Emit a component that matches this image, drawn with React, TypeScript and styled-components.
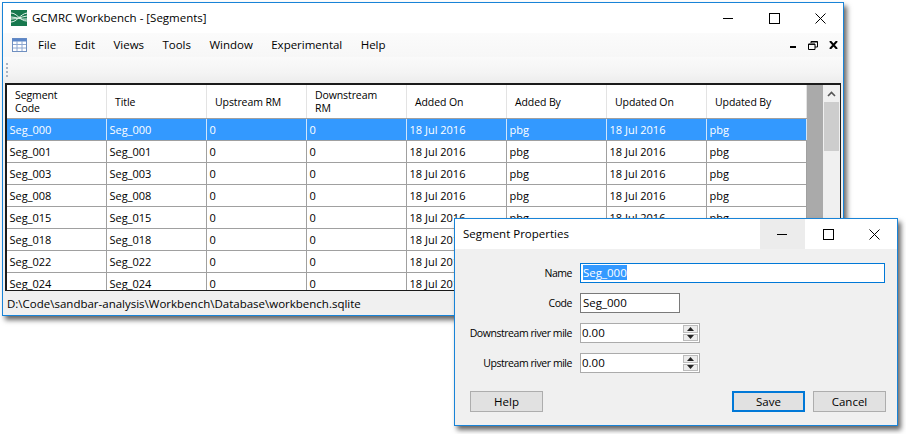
import React from "react";
import styled, { createGlobalStyle } from "styled-components";

const GlobalStyle = createGlobalStyle`
  html, body {
    margin: 0;
    padding: 0;
    background: #fff;
  }
  body {
    width: 906px;
    height: 434px;
    overflow: hidden;
    font-family: "Open Sans", "Noto Sans", Arial, sans-serif;
    font-size: 11.5px;
    color: #000;
  }
`;

const Stage = styled.div`
  position: relative;
  width: 906px;
  height: 434px;
  padding: 2px 0 0 2px;
  box-sizing: border-box;
`;

const MainWindow = styled.div`
  width: 842px;
  height: 314px;
  box-sizing: border-box;
  border: 1px solid #1883d7;
  box-shadow: 3px 4px 5px rgba(0, 0, 0, 0.6);
  background: #f0f0f0;
  display: flex;
  flex-direction: column;
`;

const TitleBar = styled.div`
  height: 30px;
  flex: none;
  background: #fff;
  display: flex;
  align-items: center;
`;

const AppLogo = styled.svg`
  margin-left: 8px;
  margin-right: 5px;
  flex: none;
`;

const TitleText = styled.div`
  flex: 1;
  font-size: 11.5px;
  padding-bottom: 2px;
`;

const CaptionButton = styled.div<{ $width: number; $hover?: boolean }>`
  width: ${(p) => p.$width}px;
  height: 30px;
  display: flex;
  align-items: center;
  justify-content: center;
  background: ${(p) => (p.$hover ? "#ececec" : "transparent")};
`;

const MenuBar = styled.div`
  height: 24px;
  flex: none;
  display: flex;
  align-items: center;
  background: linear-gradient(#fbfbfb, #f7f7f7);
  padding-left: 9px;
`;

const GridIcon = styled.svg`
  margin-right: 11px;
  flex: none;
`;

const MenuItem = styled.div`
  font-size: 11.5px;
  margin-right: 18.4px;
  padding-bottom: 2px;
`;

const MdiButtons = styled.div`
  margin-left: auto;
  display: flex;
  align-items: center;
  gap: 11px;
  padding-right: 5px;
`;

const ToolStrip = styled.div`
  height: 26px;
  flex: none;
  background: linear-gradient(#fafafa, #f4f4f4 60%, #ececec);
  display: flex;
  align-items: center;
  padding-left: 3px;
`;

const Grip = styled.div`
  width: 2px;
  height: 15px;
  background: repeating-linear-gradient(#a9b4c2 0 2px, transparent 2px 4px);
`;

const GridFrame = styled.div`
  flex: 1;
  min-height: 0;
  margin: 0 2px 0 2px;
  border: 2px solid #1a1a1a;
  border-right-width: 1px;
  border-bottom-width: 1px;
  display: flex;
  overflow: hidden;
  background: #aaaaaa;
`;

const GridBody = styled.div`
  flex: 1;
  min-width: 0;
  overflow: hidden;
`;

const Row = styled.div<{ $header?: boolean; $selected?: boolean }>`
  display: grid;
  grid-template-columns: repeat(8, 100px);
  width: 800px;
  height: ${(p) => (p.$header ? "33px" : "21px")};
  background: ${(p) => (p.$selected ? "#3399ff" : "#fff")};
  color: ${(p) => (p.$selected ? "#fff" : "#000")};
  border-bottom: 1px solid #a0a0a0;
`;

const HeaderCell = styled.div`
  border-right: 1px solid #e3e3e3;
  display: flex;
  align-items: center;
  padding: 1px 0 0 8px;
  line-height: 13px;
  font-size: 10.5px;
  letter-spacing: -0.1px;
  box-sizing: border-box;
`;

const Cell = styled.div<{ $selected?: boolean }>`
  border-right: 1px solid ${(p) => (p.$selected ? "#cfe5fb" : "#a0a0a0")};
  display: flex;
  align-items: center;
  padding-left: 2.5px;
  font-size: 11px;
  white-space: nowrap;
  overflow: hidden;
  box-sizing: border-box;
`;

const ScrollBar = styled.div`
  width: 17px;
  flex: none;
  background: #f0f0f0;
  display: flex;
  flex-direction: column;
`;

const ScrollArrow = styled.div`
  height: 17px;
  display: flex;
  align-items: center;
  justify-content: center;
`;

const ScrollThumb = styled.div`
  height: 49px;
  margin: 0 1px;
  background: #cdcdcd;
`;

const StatusBar = styled.div`
  height: 24px;
  flex: none;
  display: flex;
  align-items: center;
  padding-left: 4px;
  font-size: 11.5px;
  background: #f0f0f0;
`;

const Dialog = styled.div`
  position: absolute;
  left: 454px;
  top: 218px;
  width: 444px;
  height: 208px;
  box-sizing: border-box;
  border: 1px solid #1883d7;
  box-shadow: 3px 4px 5px rgba(0, 0, 0, 0.6);
  background: #f0f0f0;
  display: flex;
  flex-direction: column;
`;

const DialogTitle = styled.div`
  height: 30px;
  flex: none;
  background: #fff;
  display: flex;
  align-items: center;
  padding-left: 8px;
`;

const Form = styled.div`
  display: grid;
  grid-template-columns: 117px 1fr;
  grid-auto-rows: 20px;
  column-gap: 8px;
  row-gap: 10px;
  padding: 14px 16px 0 0;
`;

const FieldLabel = styled.div`
  text-align: right;
  font-size: 10.5px;
  letter-spacing: -0.45px;
  white-space: nowrap;
  align-self: center;
`;

const TextBox = styled.div<{ $width: number; $focused?: boolean }>`
  width: ${(p) => p.$width}px;
  height: 20px;
  box-sizing: border-box;
  border: 1px solid ${(p) => (p.$focused ? "#0078d7" : "#7a7a7a")};
  background: #fff;
  display: flex;
  align-items: center;
  padding: 0 0 1px 2px;
  font-size: 11.5px;
`;

const Selection = styled.span`
  background: #3399ff;
  color: #fff;
`;

const SpinBox = styled.div`
  width: 120px;
  height: 20px;
  box-sizing: border-box;
  border: 1px solid #ababab;
  background: #fff;
  display: flex;
  align-items: center;
  padding-left: 1px;
  font-size: 11.5px;
`;

const SpinValue = styled.div`
  flex: 1;
  padding-bottom: 2px;
`;

const SpinButtons = styled.div`
  width: 15px;
  height: 16px;
  margin-right: 1px;
  display: flex;
  flex-direction: column;
  gap: 1px;
`;

const SpinButton = styled.div`
  flex: 1;
  background: #ececec;
  border: 1px solid #bcbcbc;
  box-sizing: border-box;
  display: flex;
  align-items: center;
  justify-content: center;
`;

const Actions = styled.div`
  display: flex;
  align-items: center;
  margin-top: auto;
  padding: 0 11px 13px 15px;
`;

const ActionButton = styled.div<{ $default?: boolean }>`
  width: 73px;
  height: 21px;
  box-sizing: border-box;
  background: #e1e1e1;
  border: ${(p) => (p.$default ? "2px solid #0078d7" : "1px solid #adadad")};
  display: flex;
  align-items: center;
  justify-content: center;
  font-size: 11.5px;
  margin-left: ${(p) => (p.$default ? "auto" : "0")};
`;

const CancelButton = styled(ActionButton)`
  margin-left: 8px;
`;

const MinimizeIcon = () => (
  <svg width="11" height="11" viewBox="0 0 11 11">
    <path d="M0 5.5H10" stroke="#000" strokeWidth="1" fill="none" />
  </svg>
);

const MaximizeIcon = () => (
  <svg width="11" height="11" viewBox="0 0 11 11">
    <rect x="0.5" y="0.5" width="10" height="10" stroke="#000" fill="none" />
  </svg>
);

const CloseIcon = () => (
  <svg width="11" height="11" viewBox="0 0 11 11">
    <path d="M0.5 0.5L10.5 10.5M10.5 0.5L0.5 10.5" stroke="#000" fill="none" />
  </svg>
);

const TriangleUp = () => (
  <svg width="7" height="4" viewBox="0 0 7 4">
    <path d="M3.5 0L7 4H0Z" fill="#222" />
  </svg>
);

const TriangleDown = () => (
  <svg width="7" height="4" viewBox="0 0 7 4">
    <path d="M0 0H7L3.5 4Z" fill="#222" />
  </svg>
);

const headers: React.ReactNode[] = [
  <>Segment<br />Code</>,
  "Title",
  "Upstream RM",
  <>Downstream<br />RM</>,
  "Added On",
  "Added By",
  "Updated On",
  "Updated By",
];

const segments = ["000", "001", "003", "008", "015", "018", "022", "024"];

export default function App() {
  return (
    <Stage>
      <GlobalStyle />
      <MainWindow>
        <TitleBar>
          <AppLogo width="16" height="16" viewBox="0 0 16 16">
            <rect width="16" height="16" fill="#17784e" />
            <path d="M0 3C6 3 9 11 16 11M0 7C6 7 9 10 16 9M0 12C6 12 9 4 16 3M0 9C6 9 10 7 16 6" stroke="#e6f3ec" strokeWidth="1" fill="none" />
          </AppLogo>
          <TitleText>GCMRC Workbench - [Segments]</TitleText>
          <CaptionButton $width={46}><MinimizeIcon /></CaptionButton>
          <CaptionButton $width={46}><MaximizeIcon /></CaptionButton>
          <CaptionButton $width={46}><CloseIcon /></CaptionButton>
        </TitleBar>
        <MenuBar>
          <GridIcon width="15" height="14" viewBox="0 0 15 14">
            <rect x="0.5" y="0.5" width="14" height="13" fill="#fff" stroke="#6f8fc0" />
            <rect x="0.5" y="0.5" width="14" height="3" fill="#5b86c8" />
            <path d="M5 3V13M10 3V13M1 6.5H14M1 10H14" stroke="#8fa8d0" />
          </GridIcon>
          {["File", "Edit", "Views", "Tools", "Window", "Experimental", "Help"].map((m) => (
            <MenuItem key={m}>{m}</MenuItem>
          ))}
          <MdiButtons>
            <svg width="8" height="8" viewBox="0 0 8 8"><rect x="1" y="5" width="6" height="2" fill="#000" /></svg>
            <svg width="10" height="9" viewBox="0 0 10 9"><path d="M3 2V.5H9.5V6H7M.5 3H7V8.5H.5Z M3 1H9.5M.5 3.4H7" fill="none" stroke="#000" /></svg>
            <svg width="9" height="8" viewBox="0 0 9 8"><path d="M1 0L8 8M8 0L1 8" stroke="#000" strokeWidth="2" /></svg>
          </MdiButtons>
        </MenuBar>
        <ToolStrip><Grip /></ToolStrip>
        <GridFrame>
          <GridBody>
            <Row $header>
              {headers.map((h, i) => (
                <HeaderCell key={i}><span>{h}</span></HeaderCell>
              ))}
            </Row>
            {segments.map((s, i) => {
              const values = [`Seg_${s}`, `Seg_${s}`, "0", "0", "18 Jul 2016", "pbg", "18 Jul 2016", "pbg"];
              return (
                <Row key={s} $selected={i === 0}>
                  {values.map((v, j) => (
                    <Cell key={j} $selected={i === 0}>{v}</Cell>
                  ))}
                </Row>
              );
            })}
          </GridBody>
          <ScrollBar>
            <ScrollArrow>
              <svg width="9" height="6" viewBox="0 0 9 6">
                <path d="M1 5L4.5 1.5L8 5" stroke="#555" strokeWidth="1.6" fill="none" />
              </svg>
            </ScrollArrow>
            <ScrollThumb />
          </ScrollBar>
        </GridFrame>
        <StatusBar>D:\Code\sandbar-analysis\Workbench\Database\workbench.sqlite</StatusBar>
      </MainWindow>
      <Dialog>
        <DialogTitle>
          <TitleText>Segment Properties</TitleText>
          <CaptionButton $width={45} $hover><MinimizeIcon /></CaptionButton>
          <CaptionButton $width={46}><MaximizeIcon /></CaptionButton>
          <CaptionButton $width={46}><CloseIcon /></CaptionButton>
        </DialogTitle>
        <Form>
          <FieldLabel>Name</FieldLabel>
          <TextBox $width={305} $focused><Selection>Seg_000</Selection></TextBox>
          <FieldLabel>Code</FieldLabel>
          <TextBox $width={100}>Seg_000</TextBox>
          <FieldLabel>Downstream river mile</FieldLabel>
          <SpinBox>
            <SpinValue>0.00</SpinValue>
            <SpinButtons>
              <SpinButton><TriangleUp /></SpinButton>
              <SpinButton><TriangleDown /></SpinButton>
            </SpinButtons>
          </SpinBox>
          <FieldLabel>Upstream river mile</FieldLabel>
          <SpinBox>
            <SpinValue>0.00</SpinValue>
            <SpinButtons>
              <SpinButton><TriangleUp /></SpinButton>
              <SpinButton><TriangleDown /></SpinButton>
            </SpinButtons>
          </SpinBox>
        </Form>
        <Actions>
          <ActionButton>Help</ActionButton>
          <ActionButton $default>Save</ActionButton>
          <CancelButton>Cancel</CancelButton>
        </Actions>
      </Dialog>
    </Stage>
  );
}
